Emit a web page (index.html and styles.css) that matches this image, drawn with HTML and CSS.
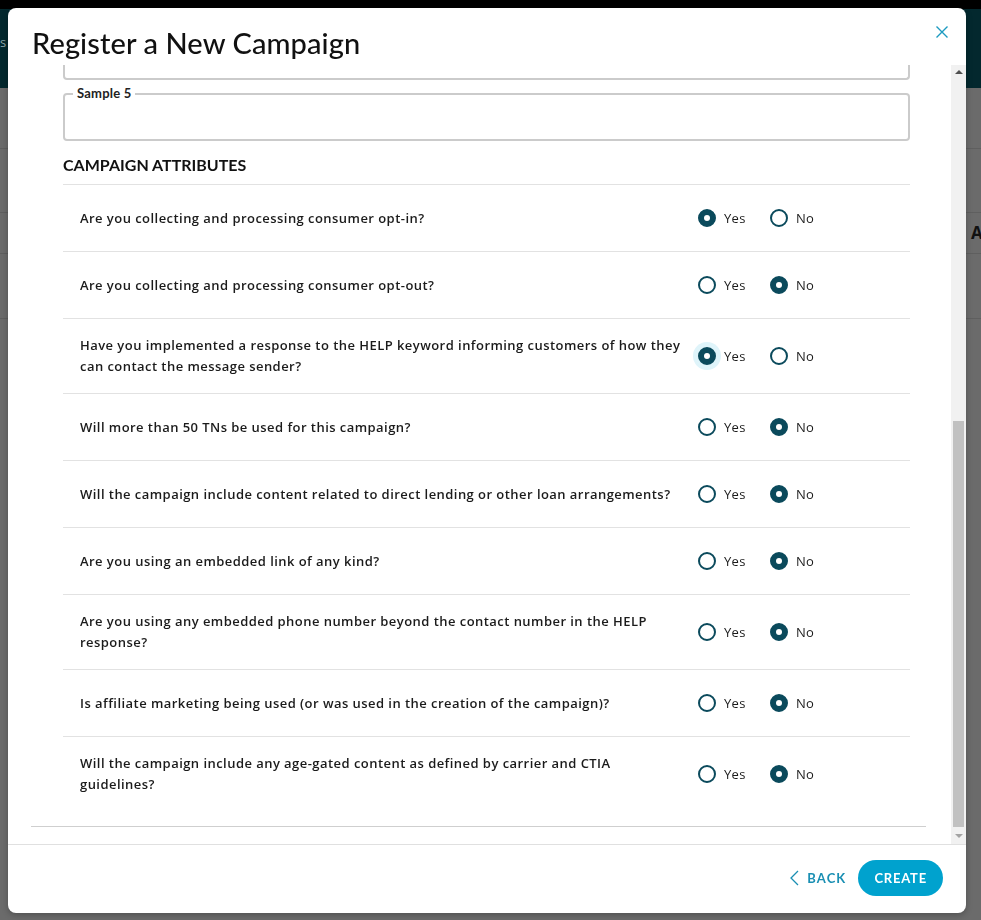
FILE: index.html
```html
<!DOCTYPE html>
<html>
<head>
<meta charset="utf-8">
<link rel="stylesheet" href="styles.css">
</head>
<body>
<div class="page">
  <div class="topstrip"></div>
  <div class="appbar"><span class="appbar-text">s</span></div>
  <div class="bg-row bg-r1"></div>
  <div class="bg-row bg-r2"></div>
  <div class="bg-row bg-r3"><span class="bg-a">A</span></div>
  <div class="bg-row bg-r4"></div>
</div>

<div class="modal">
  <div class="modal-header">
    <h1 class="modal-title">Register a New Campaign</h1>
    <svg class="close" width="12" height="12" viewBox="0 0 12 12"><path d="M0.5 0.5 L11.5 11.5 M11.5 0.5 L0.5 11.5" stroke="#1c9ac0" stroke-width="1.4" fill="none"/></svg>
  </div>
  <div class="modal-body">
    <div class="scroll-content">
      <div class="form">
        <div class="field-partial"></div>
        <div class="field"><span class="field-label">Sample 5</span></div>
        <h2 class="section-title">CAMPAIGN ATTRIBUTES</h2>
        <div class="rows">
          <div class="row">
            <div class="question">Are you collecting and processing consumer opt-in?</div>
            <div class="options"><label class="opt"><span class="radio checked"></span>Yes</label><label class="opt"><span class="radio"></span>No</label></div>
          </div>
          <div class="row">
            <div class="question">Are you collecting and processing consumer opt-out?</div>
            <div class="options"><label class="opt"><span class="radio"></span>Yes</label><label class="opt"><span class="radio checked"></span>No</label></div>
          </div>
          <div class="row">
            <div class="question">Have you implemented a response to the HELP keyword informing customers of how they can contact the message sender?</div>
            <div class="options"><label class="opt"><span class="radio checked focus"></span>Yes</label><label class="opt"><span class="radio"></span>No</label></div>
          </div>
          <div class="row">
            <div class="question">Will more than 50 TNs be used for this campaign?</div>
            <div class="options"><label class="opt"><span class="radio"></span>Yes</label><label class="opt"><span class="radio checked"></span>No</label></div>
          </div>
          <div class="row">
            <div class="question">Will the campaign include content related to direct lending or other loan arrangements?</div>
            <div class="options"><label class="opt"><span class="radio"></span>Yes</label><label class="opt"><span class="radio checked"></span>No</label></div>
          </div>
          <div class="row">
            <div class="question">Are you using an embedded link of any kind?</div>
            <div class="options"><label class="opt"><span class="radio"></span>Yes</label><label class="opt"><span class="radio checked"></span>No</label></div>
          </div>
          <div class="row">
            <div class="question">Are you using any embedded phone number beyond the contact number in the HELP response?</div>
            <div class="options"><label class="opt"><span class="radio"></span>Yes</label><label class="opt"><span class="radio checked"></span>No</label></div>
          </div>
          <div class="row">
            <div class="question">Is affiliate marketing being used (or was used in the creation of the campaign)?</div>
            <div class="options"><label class="opt"><span class="radio"></span>Yes</label><label class="opt"><span class="radio checked"></span>No</label></div>
          </div>
          <div class="row">
            <div class="question">Will the campaign include any age-gated content as defined by carrier and CTIA guidelines?</div>
            <div class="options"><label class="opt"><span class="radio"></span>Yes</label><label class="opt"><span class="radio checked"></span>No</label></div>
          </div>
        </div>
      </div>
    </div>
    <div class="scrollbar">
      <div class="sb-arrow sb-up"></div>
      <div class="sb-track"><div class="sb-thumb"></div></div>
      <div class="sb-arrow sb-down"></div>
    </div>
  </div>
  <div class="modal-footer">
    <button class="btn-back"><svg width="9" height="16" viewBox="0 0 9 16"><path d="M8 1 L1 8 L8 15" stroke="#1a8fb3" stroke-width="1.3" fill="none"/></svg>BACK</button>
    <button class="btn-create">CREATE</button>
  </div>
</div>
</body>
</html>
```

FILE: styles.css
```css
* { box-sizing: border-box; }
html, body { margin: 0; padding: 0; }
body {
  background: #6b6b6b;
  font-family: "Open Sans", "Lato", sans-serif;
  width: 981px;
  height: 920px;
  overflow: hidden;
}
.page { width: 981px; }
.topstrip { height: 9px; background: #000; }
.appbar {
  height: 79px;
  background: #03282e;
  display: flex;
  align-items: center;
}
.appbar-text {
  margin-left: 0;
  color: #8ea6a9;
  font-size: 13px;
  margin-top: -14px;
}
.bg-row { border-bottom: 1px solid #5f5f5f; position: relative; }
.bg-r1 { height: 61px; }
.bg-r2 { height: 64px; }
.bg-r3 { height: 41px; }
.bg-r4 { height: 65px; }
.bg-a {
  position: absolute;
  left: 971px;
  top: 8px;
  font-size: 17px;
  font-weight: 700;
  color: #111;
}

.modal {
  position: fixed;
  left: 8px;
  top: 8px;
  width: 958px;
  height: 905px;
  background: #fff;
  border-radius: 8px;
  display: flex;
  flex-direction: column;
  overflow: hidden;
  box-shadow: 0 2px 6px rgba(0,0,0,0.25);
}
.modal-header {
  height: 57px;
  flex: none;
  display: flex;
  justify-content: space-between;
  align-items: flex-start;
  padding: 18px 18px 0 24px;
}
.modal-title {
  margin: 0;
  font-family: "Lato", sans-serif;
  font-size: 29px;
  line-height: 34px;
  font-weight: 500;
  color: #111;
  letter-spacing: 0.1px;
}
.close { display: block; }

.modal-body {
  height: 779px;
  flex: none;
  display: flex;
}
.scroll-content {
  flex: 1;
  overflow: hidden;
  padding: 0 25px 0 23px;
}
.form {
  padding: 0 16px 15px 32px;
  border-bottom: 1px solid #cfcfcf;
}
.field-partial {
  height: 15px;
  border: 2px solid #cbcbcb;
  border-top: none;
  border-radius: 0 0 4px 4px;
}
.field {
  position: relative;
  margin-top: 13px;
  height: 48px;
  border: 2px solid #cbcbcb;
  border-radius: 4px;
}
.field-label {
  position: absolute;
  left: 8px;
  top: -10px;
  padding: 0 4px;
  background: #fff;
  font-family: "Lato", sans-serif;
  font-size: 13px;
  line-height: 16px;
  font-weight: 700;
  color: #222;
  letter-spacing: 0.2px;
}
.section-title {
  margin: 0;
  padding: 14px 0 9px;
  font-family: "Lato", sans-serif;
  font-size: 16px;
  line-height: 20px;
  font-weight: 700;
  color: #111;
  letter-spacing: 0;
}
.rows { border-top: 1px solid #e2e2e2; }
.row {
  display: flex;
  align-items: center;
  min-height: 67px;
  padding: 16px 0 16px 17px;
  border-bottom: 1px solid #e2e2e2;
}
.row:last-child { border-bottom: none; }
.question {
  flex: 1;
  padding-right: 14px;
  font-size: 13px;
  line-height: 21px;
  font-weight: 600;
  color: #1b1b1b;
  letter-spacing: 0.45px;
}
.options {
  width: 212px;
  flex: none;
  display: flex;
}
.opt {
  width: 72px;
  display: flex;
  align-items: center;
  font-size: 13px;
  color: #1b1b1b;
  letter-spacing: 0.3px;
}
.radio {
  width: 18px;
  height: 18px;
  border: 2px solid #0b4a5c;
  border-radius: 50%;
  margin-right: 8px;
  position: relative;
  flex: none;
}
.radio.checked { background: #0b4a5c; }
.radio.checked::after {
  content: "";
  position: absolute;
  left: 4px;
  top: 4px;
  width: 6px;
  height: 6px;
  border-radius: 50%;
  background: #fff;
}
.radio.focus { box-shadow: 0 0 0 5px #dff4fa; }

.scrollbar {
  width: 15px;
  flex: none;
  background: #f1f1f1;
  display: flex;
  flex-direction: column;
}
.sb-arrow { height: 17px; position: relative; flex: none; }
.sb-up::after, .sb-down::after {
  content: "";
  position: absolute;
  left: 4px;
  width: 0;
  height: 0;
  border-left: 4px solid transparent;
  border-right: 4px solid transparent;
}
.sb-up::after { top: 5px; border-bottom: 4px solid #505050; }
.sb-down::after { top: 7px; border-top: 4px solid #a3a3a3; }
.sb-track { flex: 1; padding: 0 2px; display: flex; flex-direction: column; justify-content: flex-end; }
.sb-thumb { height: 406px; background: #c1c1c1; }

.modal-footer {
  flex: 1;
  border-top: 1px solid #e0e0e0;
  display: flex;
  justify-content: flex-end;
  align-items: center;
  padding: 0 23px 2px 0;
  gap: 12px;
}
.btn-back {
  border: none;
  background: none;
  display: flex;
  align-items: center;
  gap: 8px;
  padding: 0;
  font-family: "Lato", sans-serif;
  font-size: 13px;
  font-weight: 700;
  letter-spacing: 1.1px;
  color: #1a8fb3;
}
.btn-create {
  border: none;
  height: 36px;
  padding: 0 16px;
  border-radius: 18px;
  background: #00a2ce;
  color: #fff;
  font-family: "Lato", sans-serif;
  font-size: 13px;
  font-weight: 700;
  letter-spacing: 0.8px;
}
```
